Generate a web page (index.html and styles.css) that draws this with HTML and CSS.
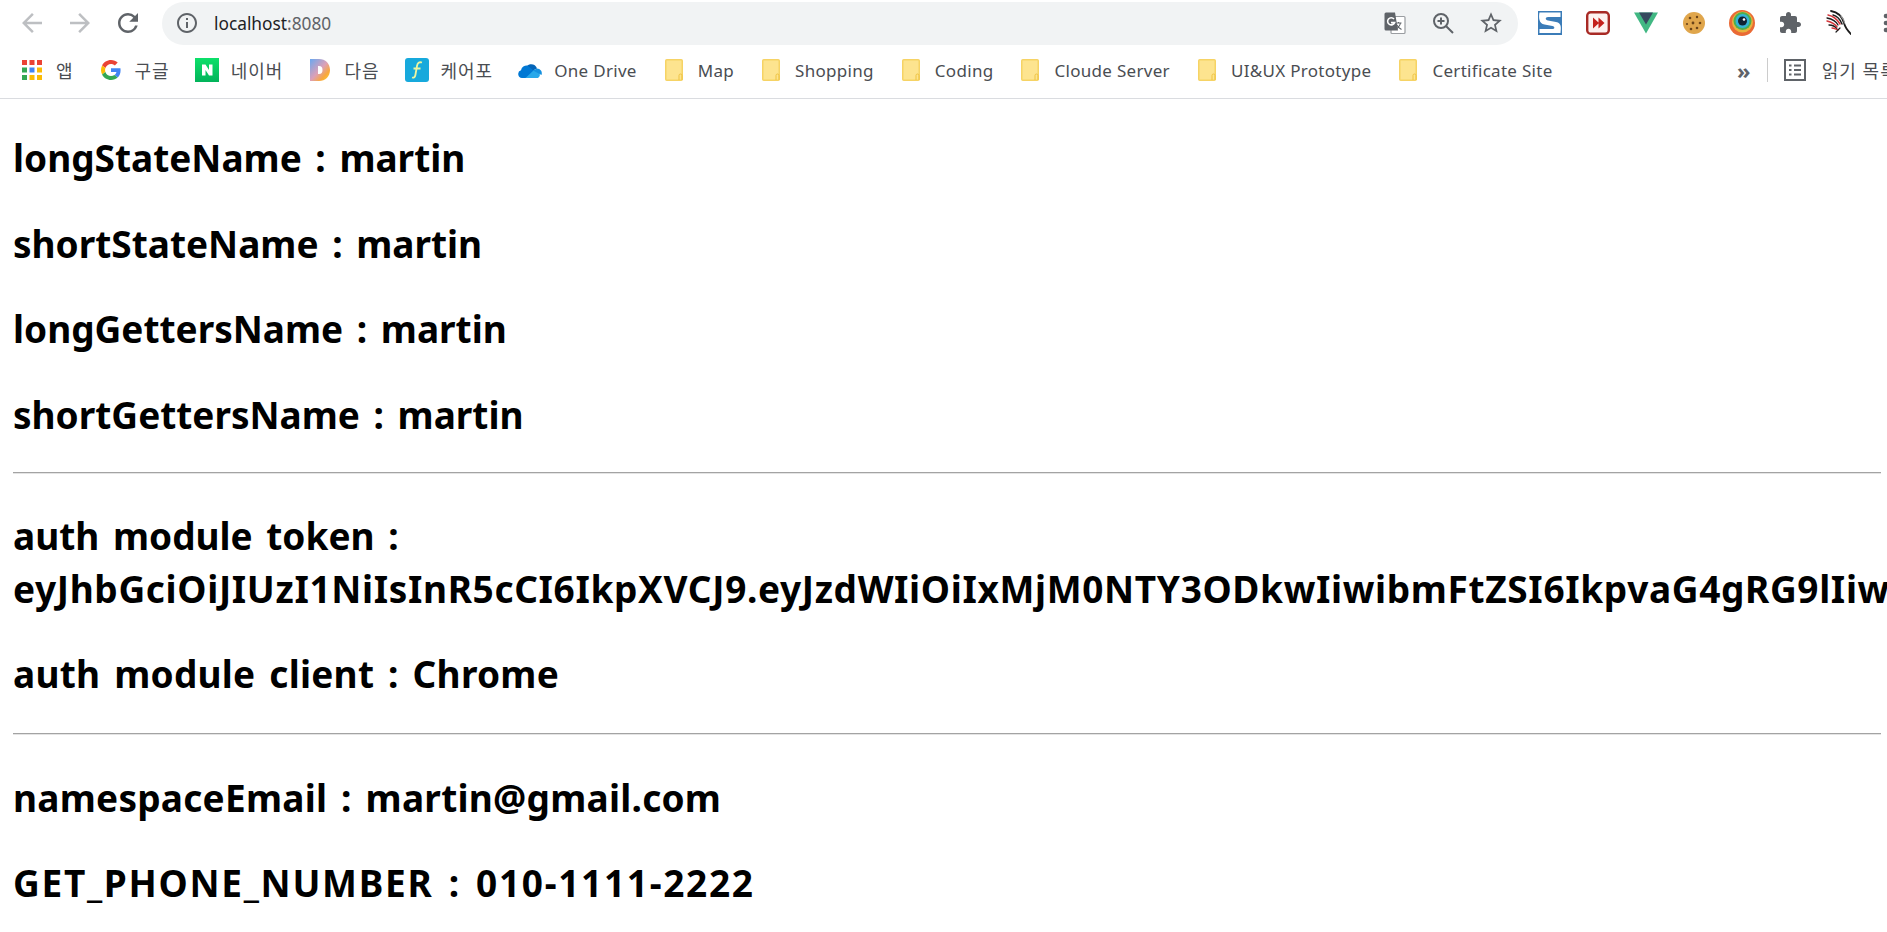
FILE: index.html
```html
<!DOCTYPE html>
<html>
  <head>
    <meta charset="utf-8">
    <title>localhost:8080</title>
    <link rel="stylesheet" href="styles.css">
  </head>
  <body>
    <svg class="defs" width="0" height="0">
      <symbol id="folder" viewBox="0 0 18 22">
        <rect x="0.75" y="0.75" width="16.5" height="20.5" rx="1" fill="#fde48f" stroke="#f6d365" stroke-width="1.5"/>
        <path d="M14 21v-4.5a1.5 1.5 0 0 1 3 0V21" fill="none" stroke="#eec342" stroke-width="1"/>
      </symbol>
    </svg>
    <div class="chrome">
      <div class="toolbar">
        <span class="btn"><svg width="30" height="30" viewBox="0 0 24 24" fill="#bdbfc2"><path d="M20 11H7.83l5.59-5.59L12 4l-8 8 8 8 1.41-1.41L7.83 13H20v-2z"/></svg></span>
        <span class="btn"><svg width="30" height="30" viewBox="0 0 24 24" fill="#bdbfc2"><path d="M4 11h12.17l-5.59-5.59L12 4l8 8-8 8-1.41-1.41L16.17 13H4v-2z"/></svg></span>
        <span class="btn"><svg width="30" height="30" viewBox="0 0 24 24" fill="#5f6368"><path d="M17.65 6.35A7.958 7.958 0 0 0 12 4c-4.42 0-7.99 3.58-7.99 8s3.57 8 7.99 8c3.73 0 6.84-2.55 7.73-6h-2.08A5.99 5.99 0 0 1 12 18c-3.31 0-6-2.69-6-6s2.69-6 6-6c1.66 0 3.14.69 4.22 1.78L13 11h7V4l-2.35 2.35z"/></svg></span>
        <div class="omnibox">
          <svg class="info" width="24" height="24" viewBox="0 0 24 24" fill="#5f6368"><path d="M11 7h2v2h-2zm0 4h2v6h-2zm1-9C6.48 2 2 6.48 2 12s4.48 10 10 10 10-4.48 10-10S17.52 2 12 2zm0 18c-4.41 0-8-3.59-8-8s3.59-8 8-8 8 3.59 8 8-3.59 8-8 8z"/></svg>
          <span class="url">localhost<span class="port">:8080</span></span>
          <span class="omni-actions">
            <span class="btn"><svg width="24" height="24" viewBox="0 0 24 24">
              <rect x="8" y="5.5" width="14" height="17" rx="1" fill="#fff" stroke="#9a9da1" stroke-width="1.2"/>
              <path d="M12.5 12h6M15.5 11v1M17.5 12c-.6 2.8-2.5 5-5 6.5M13.5 13.5c1 2 2.5 3.5 5 5" fill="none" stroke="#5f6368" stroke-width="1.1"/>
              <path d="M3 1.5h9l3 18H3a1.5 1.5 0 0 1-1.5-1.5V3A1.5 1.5 0 0 1 3 1.5z" fill="#5f6368"/>
              <path d="M11 8a3.6 3.6 0 1 0 .6 3.6H8" fill="none" stroke="#fff" stroke-width="1.6"/>
            </svg></span>
            <span class="btn"><svg width="24" height="24" viewBox="0 0 24 24" fill="none" stroke="#5f6368" stroke-width="2"><circle cx="10" cy="10" r="7"/><path d="M15.2 15.2L22 22M10 6.5v7M6.5 10h7"/></svg></span>
            <span class="btn"><svg width="26" height="26" viewBox="0 0 24 24" fill="#5f6368"><path d="M22 9.24l-7.19-.62L12 2 9.19 8.63 2 9.24l5.46 4.73L5.82 21 12 17.27 18.18 21l-1.63-7.03L22 9.24zM12 15.4l-3.76 2.27 1-4.28-3.32-2.88 4.38-.38L12 6.1l1.71 4.04 4.38.38-3.32 2.88 1 4.28L12 15.4z"/></svg></span>
          </span>
        </div>
        <div class="extensions">
          <span class="btn"><svg width="24" height="24" viewBox="0 0 24 24"><rect width="24" height="24" fill="#3b7cb8"/><path d="M22.5 1.5V6H10c-3 0-3 3 0 3.5l8 1.5c6 1.2 5 6 4.5 11H1.5v-4h13c2.5 0 2.5-2.500 0-3l-8-1.500C1 13 .5 6 1.500 1.500z" fill="#fff"/></svg></span>
          <span class="btn"><svg width="24" height="24" viewBox="0 0 24 24"><rect x="1.2" y="1.2" width="21.6" height="21.6" rx="3.5" fill="#fdf1ef" stroke="#a82a25" stroke-width="2.4"/><path d="M7 6.5l6 5.5-6 5.5zM12.5 6.5l6 5.5-6 5.5z" fill="#c4211c"/></svg></span>
          <span class="btn"><svg width="24" height="24" viewBox="0 0 24 21"><path d="M0 0h24L12 21z" fill="#41b883"/><path d="M5 0h14l-7 12z" fill="#35495e"/></svg></span>
          <span class="btn"><svg width="24" height="24" viewBox="0 0 24 24"><circle cx="12" cy="12" r="11" fill="#e0a64c"/><circle cx="8" cy="7" r="1.3" fill="#6b4419"/><circle cx="15" cy="6" r="1.2" fill="#6b4419"/><circle cx="18" cy="12" r="1.3" fill="#6b4419"/><circle cx="11" cy="12" r="1.4" fill="#6b4419"/><circle cx="5" cy="13" r="1.1" fill="#6b4419"/><circle cx="9" cy="18" r="1.3" fill="#6b4419"/><circle cx="15" cy="17" r="1.3" fill="#6b4419"/></svg></span>
          <span class="btn"><svg width="26" height="26" viewBox="0 0 26 26"><circle cx="13" cy="13" r="13" fill="#ea6a35"/><circle cx="13.5" cy="12" r="10.5" fill="#e8b23c"/><circle cx="13.5" cy="11" r="9" fill="#4caf50"/><circle cx="13.5" cy="11" r="7" fill="#35b3d6"/><circle cx="13.5" cy="11" r="4.5" fill="#123"/><circle cx="15" cy="9.5" r="1.3" fill="#fff"/></svg></span>
          <span class="btn"><svg width="24" height="24" viewBox="0 0 24 24" fill="#5f6368"><path d="M20.5 11H19V7c0-1.1-.9-2-2-2h-4V3.5C13 2.12 11.88 1 10.5 1S8 2.12 8 3.5V5H4c-1.1 0-1.99.9-1.99 2v3.8H3.5c1.49 0 2.7 1.21 2.7 2.7s-1.21 2.7-2.7 2.7H2V20c0 1.1.9 2 2 2h3.8v-1.5c0-1.49 1.21-2.7 2.7-2.7 1.49 0 2.7 1.21 2.7 2.7V22H17c1.1 0 2-.9 2-2v-4h1.5c1.38 0 2.5-1.12 2.5-2.5S21.88 11 20.5 11z"/></svg></span>
          <span class="btn"><svg width="26" height="26" viewBox="0 0 26 26" fill="none" stroke-linecap="round"><path d="M6 1c6 1 11 5 13 12 1 4 3 7 7 11" stroke="#1c1c1c" stroke-width="1.8"/><path d="M8 5c4 1 7 4 9 9" stroke="#1c1c1c" stroke-width="1.5"/><path d="M3 5c5 1 9 4 12 9" stroke="#d4363a" stroke-width="1.5"/><path d="M2 8c5 1 9 3 11 7" stroke="#1c1c1c" stroke-width="1.3"/><path d="M2 11c4 1 8 3 10 6" stroke="#d4363a" stroke-width="1.5"/><path d="M4 15c3 0 6 1 8 4" stroke="#1c1c1c" stroke-width="1.3"/><path d="M7 18c2 0 4 1 6 2" stroke="#d4363a" stroke-width="1.3"/><path d="M11 22l4-4" stroke="#1c1c1c" stroke-width="1.2"/><path d="M16 6c2 2 3 4 3.5 7" stroke="#999" stroke-width="1.2"/></svg></span>
          <span class="btn"><svg width="24" height="24" viewBox="0 0 24 24" fill="#5f6368"><circle cx="12" cy="5" r="2.3"/><circle cx="12" cy="12" r="2.3"/><circle cx="12" cy="19" r="2.3"/></svg></span>
        </div>
      </div>
      <div class="bookmarks">
        <span class="mark"><svg width="20" height="20" viewBox="0 0 20 20"><rect width="5" height="5" fill="#ea4335"/><rect x="7.5" width="5" height="5" fill="#ea4335"/><rect x="15" width="5" height="5" fill="#ea4335"/><rect y="7.5" width="5" height="5" fill="#34a853"/><rect x="7.5" y="7.5" width="5" height="5" fill="#4285f4"/><rect x="15" y="7.5" width="5" height="5" fill="#fbbc05"/><rect y="15" width="5" height="5" fill="#34a853"/><rect x="7.5" y="15" width="5" height="5" fill="#fbbc05"/><rect x="15" y="15" width="5" height="5" fill="#fbbc05"/></svg><span class="ko">앱</span></span>
        <span class="mark"><svg width="20" height="20" viewBox="0 0 48 48"><path fill="#ea4335" d="M24 9.5c3.5 0 6.7 1.3 9.2 3.5l6.900-6.900C35.900 2.400 30.300 0 24 0 14.600 0 6.500 5.400 2.600 13.200l8 6.200C12.500 13.600 17.800 9.500 24 9.500z"/><path fill="#4285f4" d="M47 24.500c0-1.600-.2-3.100-.4-4.500H24v9h13c-.6 3-2.300 5.500-4.800 7.200l7.700 6C44.400 37.900 47 31.800 47 24.500z"/><path fill="#fbbc05" d="M10.500 28.600C10 27.200 9.800 25.600 9.800 24s.3-3.200.8-4.600l-8-6.200C1 16.400 0 20.100 0 24s1 7.600 2.600 10.800l7.900-6.200z"/><path fill="#34a853" d="M24 48c6.500 0 11.900-2.100 15.900-5.800l-7.700-6c-2.200 1.400-4.900 2.300-8.200 2.300-6.200 0-11.500-4.200-13.400-9.900l-8 6.200C6.500 42.600 14.600 48 24 48z"/></svg><span class="ko">구글</span></span>
        <span class="mark"><svg class="wide" width="24" height="24" viewBox="0 0 24 24"><defs><linearGradient id="naver" x1="0" y1="0" x2="0" y2="1"><stop offset="0" stop-color="#0de06a"/><stop offset="1" stop-color="#02b35a"/></linearGradient></defs><rect width="24" height="24" fill="url(#naver)"/><path d="M7 6.5h3.5l3.500 5.500V6.500h3.500v11h-3.500L10.500 12v5.500H7z" fill="#fff"/></svg><span class="ko">네이버</span></span>
        <span class="mark"><svg width="20" height="22" viewBox="0 0 20 22"><defs><linearGradient id="daum" x1="0" y1="0" x2="1" y2="1"><stop offset="0" stop-color="#6aa8f0"/><stop offset="0.5" stop-color="#dca0b8"/><stop offset="0.75" stop-color="#f9a83c"/><stop offset="1" stop-color="#fdd835"/></linearGradient></defs><path fill-rule="evenodd" d="M0 0h9c6.5 0 11 4.5 11 11s-4.5 11-11 11H0zM8 7v8h1c2.5 0 3.5-1.5 3.5-4S11.5 7 9 7z" fill="url(#daum)"/></svg><span class="ko">다음</span></span>
        <span class="mark"><svg class="wide" width="24" height="24" viewBox="0 0 24 24"><rect width="24" height="24" rx="3" fill="#17a9dc"/><path d="M17 4.5c-3-.8-4.500.5-5 3.500l-1.600 9c-.4 2-1.500 3-3.400 2.500M8.500 10.500h7" fill="none" stroke="#eef5a0" stroke-width="1.8"/></svg><span class="ko">케어포</span></span>
        <span class="mark"><svg class="wide" width="24" height="16" viewBox="0 0 24 16"><path d="M9 13l6-6 6 3.500A4 4 0 0 1 20 16H7z" fill="#28a8ea"/><path d="M9.500 3.500A6 6 0 0 1 19 6.500L15 8.500 9 5z" fill="#0364b8"/><path d="M9.500 3.500l6 5-8 7.500H4a4 4 0 0 1-1-7.800A6 6 0 0 1 9.500 3.500z" fill="#0078d4"/><path d="M19 6.500a4.800 4.800 0 0 1 4.500 6.500L15 8.500z" fill="#1490df"/></svg><span>One Drive</span></span>
        <span class="mark"><svg class="folder" width="18" height="22"><use href="#folder"/></svg><span>Map</span></span>
        <span class="mark"><svg class="folder" width="18" height="22"><use href="#folder"/></svg><span>Shopping</span></span>
        <span class="mark"><svg class="folder" width="18" height="22"><use href="#folder"/></svg><span>Coding</span></span>
        <span class="mark"><svg class="folder" width="18" height="22"><use href="#folder"/></svg><span>Cloude Server</span></span>
        <span class="mark"><svg class="folder" width="18" height="22"><use href="#folder"/></svg><span>UI&amp;UX Prototype</span></span>
        <span class="mark"><svg class="folder" width="18" height="22"><use href="#folder"/></svg><span>Certificate Site</span></span>
        <div class="bookmarks-end">
          <span class="more">»</span>
          <span class="divider"></span>
          <span class="mark reading"><svg width="22" height="22" viewBox="0 0 22 22" fill="none" stroke="#5f6368"><rect x="1" y="1" width="20" height="20" stroke-width="2"/><path d="M5 6.500h2.500M10 6.500h7M5 11h2.500M10 11h7M5 15.500h2.500M10 15.500h7" stroke-width="2"/></svg><span class="ko">읽기 목록</span></span>
        </div>
      </div>
    </div>
    <main class="page">
      <h2>longStateName : martin</h2>
      <h2>shortStateName : martin</h2>
      <h2>longGettersName : martin</h2>
      <h2>shortGettersName : martin</h2>
      <hr class="rule-first">
      <h2>auth module token : <span class="caps">eyJhbGciOiJIUzI1NiIsInR5cCI6IkpXVCJ9.eyJzdWIiOiIxMjM0NTY3ODkwIiwibmFtZSI6IkpvaG4gRG9lIiw</span></h2>
      <h2 class="tracked">auth module client : Chrome</h2>
      <hr class="rule-second">
      <h2 class="tracked">namespaceEmail : martin@gmail.com</h2>
      <h2 class="wide-caps">GET_PHONE_NUMBER : 010-1111-2222</h2>
    </main>
  </body>
</html>
```

FILE: styles.css
```css
* {
  box-sizing: border-box;
}

html, body {
  margin: 0;
  padding: 0;
  background-color: #fff;
  overflow: hidden;
}

body {
  width: 1887px;
  height: 932px;
  font-family: "Noto Sans", "Noto Sans CJK KR", sans-serif;
}

.defs {
  display: block;
  height: 0;
}

.chrome {
  height: 99px;
  border-bottom: 1px solid #dadce0;
}

.toolbar {
  display: flex;
  align-items: center;
  height: 46px;
  padding-left: 8px;
}

.btn {
  display: flex;
  flex: none;
  align-items: center;
  justify-content: center;
  width: 48px;
  height: 42px;
}

.omnibox {
  display: flex;
  flex: none;
  align-items: center;
  width: 1356px;
  height: 43px;
  margin-left: 10px;
  padding: 0 3px 0 13px;
  background-color: #f1f3f4;
  border-radius: 22px;
}

.url {
  margin-left: 15px;
  font-size: 17.3px;
  color: #202124;
}

.port {
  color: #5f6368;
}

.omni-actions {
  display: flex;
  margin-left: auto;
}

.extensions {
  display: flex;
  flex: none;
  margin-left: 8px;
}

.bookmarks {
  display: flex;
  align-items: center;
  gap: 27px;
  height: 48px;
  padding-left: 22px;
  font-size: 17px;
  letter-spacing: 0.3px;
  color: #4a4d52;
  white-space: nowrap;
}

.mark {
  display: flex;
  flex: none;
  align-items: center;
  gap: 14px;
}

.mark svg {
  flex: none;
}

.mark .wide {
  margin: 0 -2px;
}

.mark .folder {
  margin: 0 1px;
}

.ko {
  font-size: 18px;
  letter-spacing: 1px;
}

.bookmarks-end {
  display: flex;
  flex: none;
  align-items: center;
  gap: 16px;
  width: 150px;
  margin-left: auto;
}

.more {
  flex: none;
  font-size: 22px;
  font-weight: 700;
  color: #5f6368;
}

.divider {
  flex: none;
  width: 1px;
  height: 24px;
  background-color: #ccc;
}

.reading {
  width: 104px;
  gap: 16px;
  overflow: hidden;
}

.page {
  padding: 32px 6px 0 13px;
}

h2 {
  margin: 0;
  font-size: 37px;
  font-weight: 700;
  line-height: 53px;
  word-spacing: 4px;
  color: #000;
}

h2 + h2 {
  margin-top: 32.7px;
}

.caps {
  letter-spacing: 0.65px;
}

.tracked {
  letter-spacing: 0.25px;
}

.wide-caps {
  letter-spacing: 1.7px;
}

hr {
  height: 2px;
  border: 0;
  border-top: 1px solid #a3a3a3;
  border-bottom: 1px solid #e4e4e4;
}

.rule-first {
  margin: 31px 0 34.5px;
}

.rule-second {
  margin: 33px 0 35.5px;
}
```
